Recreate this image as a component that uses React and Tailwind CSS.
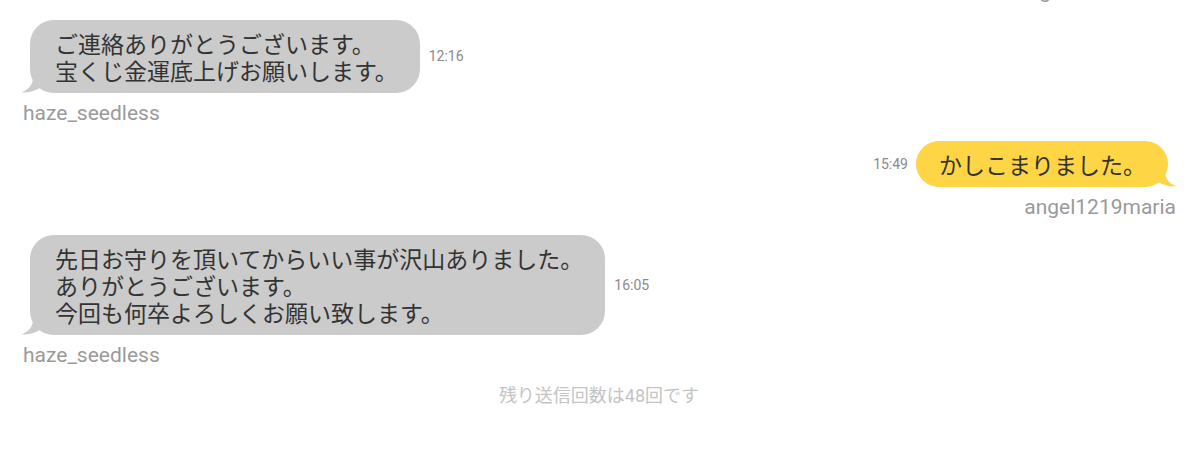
const FONT = { fontFamily: "Roboto, 'Noto Sans CJK JP', sans-serif" };

function TailLeft() {
  return (
    <svg
      className="absolute left-[-9px] bottom-0"
      width="24"
      height="15"
      viewBox="0 0 24 15"
    >
      <path d="M12 0 C12 7 7 12 0 14.5 C7 15 15 13 22 8 L22 0 Z" fill="#cbcbcb" />
    </svg>
  );
}

function TailRight() {
  return (
    <svg
      className="absolute right-[-9px] bottom-0"
      width="24"
      height="15"
      viewBox="0 0 24 15"
    >
      <path d="M12 0 C12 7 17 12 24 14.5 C17 15 9 13 2 8 L2 0 Z" fill="#fdd545" />
    </svg>
  );
}

function Received({ lines, time, name }) {
  return (
    <div className="flex flex-col items-start">
      <div className="flex items-center">
        <div className="relative">
          <TailLeft />
          <div className="relative rounded-[24px] bg-[#cbcbcb] pl-[25px] pr-[22px] pt-[12px] pb-[7px] text-[23px] leading-[27px] text-[#333333]">
            {lines.map((l, i) => (
              <div key={i}>{l}</div>
            ))}
          </div>
        </div>
        <span className="ml-[9px] text-[14px] text-[#8a8a8a]">{time}</span>
      </div>
      <div className="ml-[-7px] mt-[8px] text-[21px] leading-[24px] text-[#9a9a9a]">{name}</div>
    </div>
  );
}

function Sent({ text, time, name }) {
  return (
    <div className="flex flex-col items-end">
      <div className="flex items-center">
        <span className="mr-[8px] text-[14px] text-[#8a8a8a]">{time}</span>
        <div className="relative">
          <TailRight />
          <div className="relative rounded-[24px] bg-[#fdd545] pl-[23px] pr-[22px] pt-[12px] pb-[7px] text-[23px] leading-[27px] text-[#333333]">
            {text}
          </div>
        </div>
      </div>
      <div className="mr-[-8px] mt-[8px] text-[21px] leading-[24px] text-[#9a9a9a]">{name}</div>
    </div>
  );
}

export default function App() {
  return (
    <div className="h-[451px] w-[1200px] overflow-hidden bg-white" style={FONT}>
      <div className="flex flex-col pl-[30px] pr-[32px]">
        {/* previous message name, mostly scrolled off the top */}
        <div className="mt-[-21px] mr-[-8px] self-end pr-[8px] text-[21px] leading-[24px] text-[#9a9a9a]">
          angel1219maria
        </div>

        <div className="mt-[17px]">
          <Received
            lines={["ご連絡ありがとうございます。", "宝くじ金運底上げお願いします。"]}
            time="12:16"
            name="haze_seedless"
          />
        </div>

        <div className="mt-[16px]">
          <Sent text="かしこまりました。" time="15:49" name="angel1219maria" />
        </div>

        <div className="mt-[16px]">
          <Received
            lines={[
              "先日お守りを頂いてからいい事が沢山ありました。",
              "ありがとうございます。",
              "今回も何卒よろしくお願い致します。",
            ]}
            time="16:05"
            name="haze_seedless"
          />
        </div>

        <div className="mt-[17px] text-center text-[18px] leading-[24px] text-[#c4c4c4]">
          残り送信回数は48回です
        </div>
      </div>
    </div>
  );
}
